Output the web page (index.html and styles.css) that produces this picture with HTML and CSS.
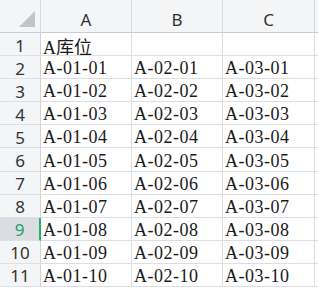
FILE: index.html
```html
<!DOCTYPE html>
<html>
<head>
<meta charset="utf-8">
<link rel="stylesheet" href="styles.css">
</head>
<body>
<div class="sheet">
  <div class="corner hd"><svg class="tri" width="16" height="16" viewBox="0 0 16 16"><polygon points="16,0 16,16 0,16" fill="#c3c4c6"/></svg></div>
  <div class="col hd">A</div><div class="col hd">B</div><div class="col hd">C</div><div class="col hd rest"></div>

  <div class="rh">1</div><div class="cell cjk">A库位</div><div class="cell"></div><div class="cell"></div><div class="cell rest"></div>
  <div class="rh">2</div><div class="cell">A-01-01</div><div class="cell">A-02-01</div><div class="cell">A-03-01</div><div class="cell rest"></div>
  <div class="rh">3</div><div class="cell">A-01-02</div><div class="cell">A-02-02</div><div class="cell">A-03-02</div><div class="cell rest"></div>
  <div class="rh">4</div><div class="cell">A-01-03</div><div class="cell">A-02-03</div><div class="cell">A-03-03</div><div class="cell rest"></div>
  <div class="rh">5</div><div class="cell">A-01-04</div><div class="cell">A-02-04</div><div class="cell">A-03-04</div><div class="cell rest"></div>
  <div class="rh">6</div><div class="cell">A-01-05</div><div class="cell">A-02-05</div><div class="cell">A-03-05</div><div class="cell rest"></div>
  <div class="rh">7</div><div class="cell">A-01-06</div><div class="cell">A-02-06</div><div class="cell">A-03-06</div><div class="cell rest"></div>
  <div class="rh">8</div><div class="cell">A-01-07</div><div class="cell">A-02-07</div><div class="cell">A-03-07</div><div class="cell rest"></div>
  <div class="rh sel">9</div><div class="cell">A-01-08</div><div class="cell">A-02-08</div><div class="cell">A-03-08</div><div class="cell rest"></div>
  <div class="rh">10</div><div class="cell">A-01-09</div><div class="cell">A-02-09</div><div class="cell">A-03-09</div><div class="cell rest"></div>
  <div class="rh">11</div><div class="cell">A-01-10</div><div class="cell">A-02-10</div><div class="cell">A-03-10</div><div class="cell rest"></div>
</div>
</body>
</html>
```

FILE: styles.css
```css
html, body {
  margin: 0;
  padding: 0;
  background: #ffffff;
  overflow: hidden;
}

.sheet {
  display: grid;
  grid-template-columns: 41px 91px 91px 92px 1fr;
  grid-template-rows: 33px repeat(11, 23.1px);
  width: 318px;
}

.hd {
  background: #f4f5f7;
  border-right: 1px solid #d8dae2;
  border-bottom: 1px solid #c9ccd6;
  box-sizing: border-box;
}

.corner {
  display: flex;
  align-items: flex-end;
  justify-content: flex-end;
  padding: 0 5px 5px 0;
}

.col {
  display: flex;
  align-items: center;
  justify-content: center;
  padding-top: 6px;
  font-family: "Noto Sans", "Noto Sans CJK SC", sans-serif;
  font-size: 17px;
  color: #333333;
}

.rest {
  border-right: none;
}

.rh {
  background: #f4f5f7;
  border-right: 1px solid #d0d3dc;
  border-bottom: 1px solid #dfe1e8;
  box-sizing: border-box;
  display: flex;
  align-items: center;
  justify-content: center;
  padding-top: 2px;
  font-family: "Noto Sans", sans-serif;
  font-size: 17px;
  color: #333333;
}

.rh.sel {
  background: #dcdde2;
  color: #21a06a;
  border-right: 2px solid #1fb36b;
}

.cell {
  border-right: 1px solid #dcdee6;
  border-bottom: 1px solid #dcdee6;
  box-sizing: border-box;
  display: flex;
  align-items: center;
  padding: 3px 0 0 2px;
  font-family: "Liberation Serif", "Noto Sans CJK SC", serif;
  font-size: 18px;
  letter-spacing: 0.5px;
  color: #1a1a1a;
  white-space: nowrap;
  overflow: hidden;
}

.cell.rest {
  border-right: none;
}

.cjk {
  font-family: "Liberation Serif", "Noto Sans CJK SC", sans-serif;
  letter-spacing: 0;
}
```
